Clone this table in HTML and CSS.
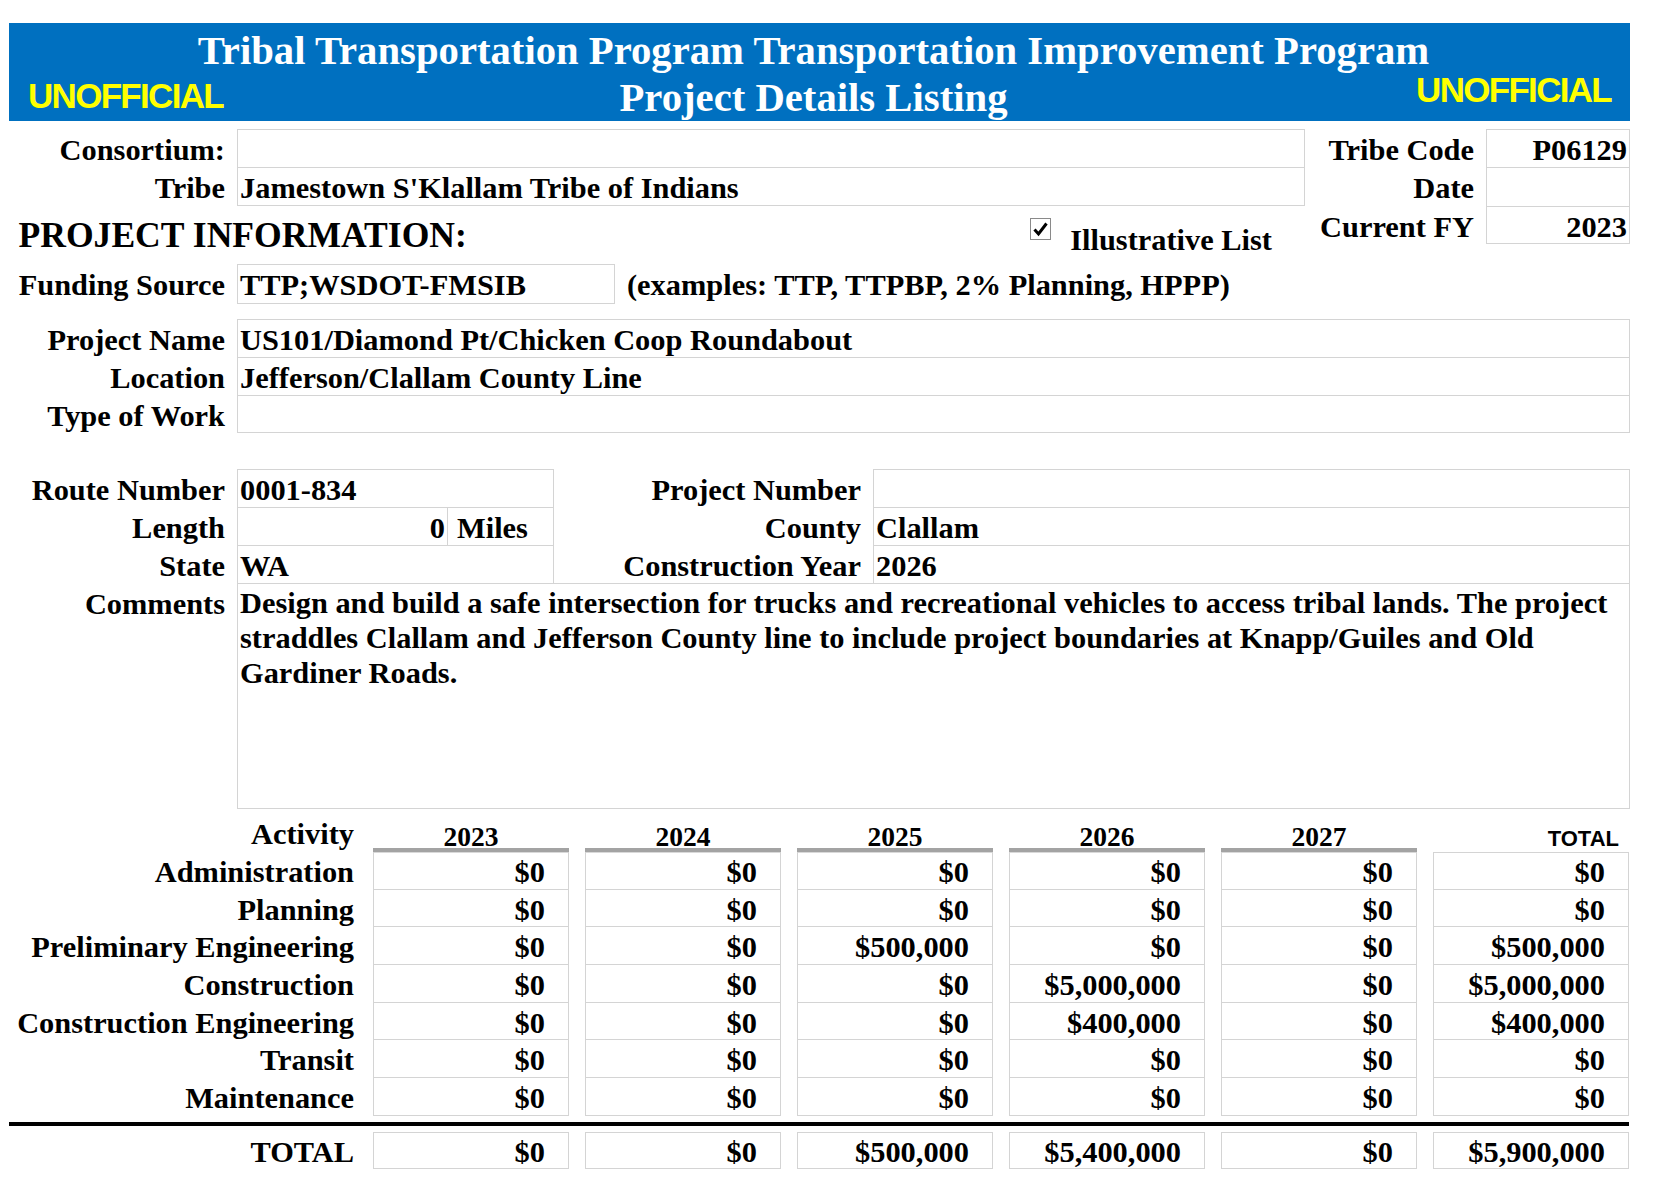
FILE: index.html
```html
<!DOCTYPE html>
<html lang="en">
<head>
<meta charset="utf-8">
<title>Project Details Listing</title>
<link rel="stylesheet" href="styles.css">
</head>
<body>
<div class="sheet">
  <header class="banner">
    <h1 class="title">Tribal Transportation Program Transportation Improvement Program<br>Project Details Listing</h1>
    <span class="stamp stamp-left">UNOFFICIAL</span>
    <span class="stamp stamp-right">UNOFFICIAL</span>
  </header>

  <section class="top">
    <div class="top-main">
      <div class="fields">
        <div class="f lbl">Consortium:</div><div class="f box"></div>
        <div class="f lbl">Tribe</div><div class="f box last">Jamestown S'Klallam Tribe of Indians</div>
      </div>
      <div class="pi">
        <h2 class="pi-title">PROJECT INFORMATION:</h2>
        <span class="illus"><svg class="cb" width="21" height="22" viewBox="0 0 21 22"><rect x="0.5" y="0.5" width="20" height="21" fill="#fff" stroke="#8a8a8a"/><path d="M4.5 11.5 L8.5 16 L16.5 5.5" fill="none" stroke="#000" stroke-width="3"/></svg>Illustrative List</span>
      </div>
    </div>
    <div class="side">
      <div class="f lbl">Tribe Code</div><div class="f box num">P06129</div>
      <div class="f lbl">Date</div><div class="f box"></div>
      <div class="f lbl">Current FY</div><div class="f box num last">2023</div>
    </div>
  </section>

  <section class="funding">
    <div class="f lbl">Funding Source</div>
    <div class="f box last">TTP;WSDOT-FMSIB</div>
    <div class="f note">(examples: TTP, TTPBP, 2% Planning, HPPP)</div>
  </section>

  <section class="project">
    <div class="f lbl">Project Name</div><div class="f box">US101/Diamond Pt/Chicken Coop Roundabout</div>
    <div class="f lbl">Location</div><div class="f box">Jefferson/Clallam County Line</div>
    <div class="f lbl">Type of Work</div><div class="f box last"></div>
  </section>

  <section class="route">
    <div class="f lbl">Route Number</div>
    <div class="f box span2">0001-834</div>
    <div class="f lbl">Project Number</div>
    <div class="f box"></div>

    <div class="f lbl">Length</div>
    <div class="f box num">0</div>
    <div class="f box miles">Miles</div>
    <div class="f lbl">County</div>
    <div class="f box">Clallam</div>

    <div class="f lbl">State</div>
    <div class="f box span2">WA</div>
    <div class="f lbl">Construction Year</div>
    <div class="f box">2026</div>

    <div class="f lbl">Comments</div>
    <div class="box comments">Design and build a safe intersection for trucks and recreational vehicles to access tribal lands. The project straddles Clallam and Jefferson County line to include project boundaries at Knapp/Guiles and Old Gardiner Roads.</div>
  </section>

  <section class="acts">
    <div class="h lbl">Activity</div>
    <div class="h yr">2023</div>
    <div class="h yr">2024</div>
    <div class="h yr">2025</div>
    <div class="h yr">2026</div>
    <div class="h yr">2027</div>
    <div class="h tot">TOTAL</div>

    <div class="c lbl">Administration</div>
    <div class="c v">$0</div><div class="c v">$0</div><div class="c v">$0</div><div class="c v">$0</div><div class="c v">$0</div><div class="c v t first">$0</div>

    <div class="c lbl">Planning</div>
    <div class="c v">$0</div><div class="c v">$0</div><div class="c v">$0</div><div class="c v">$0</div><div class="c v">$0</div><div class="c v t">$0</div>

    <div class="c lbl">Preliminary Engineering</div>
    <div class="c v">$0</div><div class="c v">$0</div><div class="c v">$500,000</div><div class="c v">$0</div><div class="c v">$0</div><div class="c v t">$500,000</div>

    <div class="c lbl">Construction</div>
    <div class="c v">$0</div><div class="c v">$0</div><div class="c v">$0</div><div class="c v">$5,000,000</div><div class="c v">$0</div><div class="c v t">$5,000,000</div>

    <div class="c lbl">Construction Engineering</div>
    <div class="c v">$0</div><div class="c v">$0</div><div class="c v">$0</div><div class="c v">$400,000</div><div class="c v">$0</div><div class="c v t">$400,000</div>

    <div class="c lbl">Transit</div>
    <div class="c v">$0</div><div class="c v">$0</div><div class="c v">$0</div><div class="c v">$0</div><div class="c v">$0</div><div class="c v t">$0</div>

    <div class="c lbl">Maintenance</div>
    <div class="c v">$0</div><div class="c v">$0</div><div class="c v">$0</div><div class="c v">$0</div><div class="c v">$0</div><div class="c v t">$0</div>

    <div class="rule"></div>

    <div class="c lbl sumlbl">TOTAL</div>
    <div class="c v sum">$0</div><div class="c v sum">$0</div><div class="c v sum">$500,000</div><div class="c v sum">$5,400,000</div><div class="c v sum">$0</div><div class="c v sum">$5,900,000</div>
  </section>
</div>
</body>
</html>
```
FILE: styles.css
```css
* { box-sizing: border-box; }
html, body { margin: 0; padding: 0; background: #fff; }
body {
  font-family: "Liberation Serif", "Times New Roman", serif;
  font-weight: 700;
  font-size: 30.4px;
  color: #000;
}
.sheet { width: 1621px; margin-left: 9px; padding-top: 23px; }

/* banner */
.banner { position: relative; height: 98px; background: #0070c0; color: #fff; }
.title {
  margin: 0; padding: 4px 12px 0 0;
  font-size: 40.7px; line-height: 47px; font-weight: 700; text-align: center;
}
.stamp {
  position: absolute;
  font-family: "Liberation Sans", Arial, sans-serif;
  font-weight: 700; font-size: 35px; line-height: 35px;
  letter-spacing: -1.7px; color: #ffff00;
}
.stamp-left { left: 19px; top: 55px; }
.stamp-right { right: 19px; top: 49px; }

/* generic field cells */
.f {
  height: 38.5px;
  padding: 4px 2px 0;
  line-height: 33.5px;
  border: 1px solid transparent;
  border-bottom: 0;
  white-space: nowrap;
  overflow: hidden;
}
.box { border-color: #d4d4d4; border-bottom: 0; }
.box.last { border-bottom: 1px solid #d4d4d4; }
.lbl { text-align: right; padding-right: 11px; border-color: transparent; }
.num { text-align: right; }

/* top */
.top { display: flex; margin-top: 7.5px; }
.top-main { width: 1296px; }
.fields { display: grid; grid-template-columns: 228px 1fr; }
.side {
  width: 325px;
  align-self: flex-start;
  display: grid;
  grid-template-columns: 1fr 144px;
}
.side .num { padding-right: 2px; }

.pi { display: flex; align-items: flex-start; height: 58.5px; }
.pi-title { margin: 0 0 0 9.5px; padding-top: 9.5px; font-size: 35.6px; line-height: 40px; font-weight: 700; }
.illus { margin-left: auto; margin-right: 33px; padding-top: 12.5px; line-height: 34px; }
.cb { margin: 0 19px 10px 0; vertical-align: baseline; }

/* funding */
.funding { display: grid; grid-template-columns: 228px 378px 1fr; }
.funding .f { height: 39.5px; }
.funding .note { padding-left: 11px; }

/* project */
.project { display: grid; grid-template-columns: 228px 1fr; margin-top: 15.5px; }
.project .f { height: 38px; }

/* route */
.route {
  display: grid;
  grid-template-columns: 228px 211px 106px 319px 757px;
  margin-top: 35.5px;
}
.route .f { height: 38px; }
.span2 { grid-column: span 2; }
.miles { border-left: 0; padding-left: 9px; }
.comments {
  grid-column: span 4;
  height: 226px;
  border: 1px solid #d4d4d4;
  padding: 2px 2px 0;
  line-height: 35.3px;
}

/* activity table */
.acts {
  display: grid;
  grid-template-columns: 348px repeat(6, 196px);
  column-gap: 16px;
}
.h { height: 43.5px; white-space: nowrap; }
.h.lbl { padding: 9.8px 3px 0 0; line-height: 33.5px; }
.yr {
  text-align: center;
  font-size: 27.5px; line-height: 30px;
  padding-top: 13.2px;
  border-bottom: 4px solid #a3a3a3;
  box-shadow: 0 1px 0 #d9d9d9;
}
.tot {
  text-align: right;
  font-family: "Liberation Sans", Arial, sans-serif;
  font-size: 22px; line-height: 24px;
  padding: 18.3px 10px 0 0;
}
.c {
  height: 37.7px;
  padding-top: 4px;
  line-height: 33.5px;
  white-space: nowrap;
}
.acts .c.lbl { padding-right: 3px; }
.v {
  text-align: right;
  padding-right: 23px;
  border: 1px solid #d4d4d4;
  border-top: 0;
}
.v.first { border-top: 1px solid #d4d4d4; padding-top: 3px; }
.v.sum { border-top: 1px solid #d4d4d4; padding-top: 3px; height: 37.3px; }
.acts .c.sumlbl { height: 37.3px; }
.rule {
  grid-column: 1 / -1;
  height: 4.5px;
  margin: 5.7px 0;
  background: #000;
}
```
